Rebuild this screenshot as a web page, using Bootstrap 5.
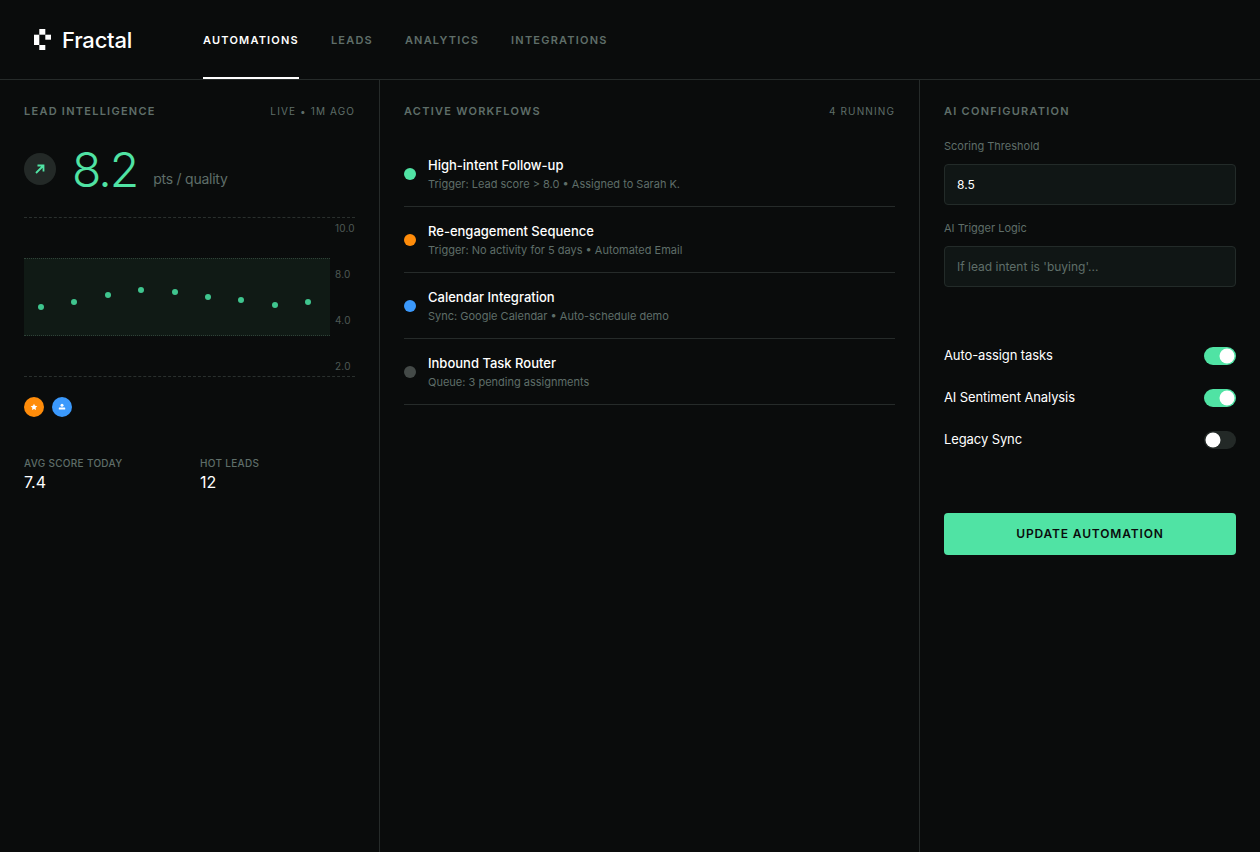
<!DOCTYPE html>
<html lang="en">
<head>
<meta charset="utf-8">
<title>Fractal</title>
<link href="https://cdn.jsdelivr.net/npm/bootstrap@5.3.0/dist/css/bootstrap.min.css" rel="stylesheet">
<style>
html,body{height:100%}
body{background:#0a0c0c;color:#fff;font-family:Inter,"Liberation Sans",sans-serif;overflow:hidden}
.top-bar{height:80px;border-bottom:1px solid #262b2a;padding-left:34px}
.brand-name{font-size:22px;font-weight:500;letter-spacing:-.01em;color:#fff;line-height:1;margin-left:11px;width:141px}
.nav-gap{gap:32px}
.top-link{font-size:11px;font-weight:600;letter-spacing:1.2px;color:#5f6e69;text-decoration:none;height:79px;padding-top:3px;display:flex;align-items:center;border-bottom:2px solid transparent}
.top-link.on{color:#fff;border-bottom-color:#fff}
.shell{height:772px}
.pane-a{width:380px;border-right:1px solid #262b2a;padding:24px}
.pane-b{width:540px;border-right:1px solid #262b2a;padding:24px}
.pane-c{width:340px;padding:24px}
.pane-head{font-size:11px;font-weight:600;letter-spacing:1.25px;color:#5f6e69;line-height:14px;margin-bottom:2px}
.pane-note{font-size:10px;letter-spacing:1.12px;color:#5f6e69;line-height:14px;margin-bottom:2px}
.score-row{margin-top:26px;height:47px;margin-bottom:24px}
.trend{width:32px;height:32px;border-radius:50%;background:#232927;margin-top:7px}
.score{font-size:48px;font-weight:300;color:#50e3a4;line-height:48px;margin-left:16px;letter-spacing:-2px}
.unit{font-size:14px;color:#5f6e69;margin-left:16px;margin-top:23px;line-height:20px;letter-spacing:-.25px}
.chart{height:160px;border-top:1px dashed #2a302e;border-bottom:1px dashed #2a302e;position:relative}
.band{position:absolute;left:0;top:40px;width:306px;height:78px;background:#101a15;border-top:1px dotted #2f4238;border-bottom:1px dotted #2f4238}
.band svg{display:block;width:306px;height:76px}
.ticks{position:absolute;right:0;top:3px;bottom:3px;width:20px;font-size:10px;line-height:14px;color:#4e5955;letter-spacing:.02em;display:flex;flex-direction:column;justify-content:space-between}
.badges{margin-top:20px;gap:8px}
.badge-dot{width:20px;height:20px;border-radius:50%}
.bg-orange{background:#ff8c0a}
.bg-blue{background:#3b99fc}
.stats{margin-top:39px}
.stat-cell{flex:0 0 176px}
.stat-label{font-size:10px;font-weight:500;letter-spacing:.3px;color:#5f6e69;line-height:14px}
.stat-value{font-size:16px;font-weight:400;color:#fff;line-height:24px}
.flow-list{margin-top:21px}
.flow{height:66px;border-bottom:1px solid #262b2a;gap:12px}
.flow-dot{width:12px;height:12px;border-radius:50%;flex:none}
.bg-mint{background:#50e3a4}
.bg-idle{background:#444a48}
.flow-title{font-size:13px;font-weight:500;color:#fff;line-height:20px}
.flow-sub{font-size:11px;color:#5f6e69;line-height:16px;margin-top:1px}
.group-one{margin-top:20px}
.group-two{margin-top:15px}
.field-label{font-size:11px;color:#5f6e69;line-height:16px;margin-bottom:10px;display:block}
.field{height:41px;background:#101615;border:1px solid #232b29;border-radius:4px;color:#fff;font-size:12px;padding:0 12px;font-family:inherit}
.field:focus{background:#101615;border-color:#232b29;color:#fff;box-shadow:none}
.field::placeholder{color:#5f6e69;opacity:1}
.switches{margin-top:48px}
.switch-row{height:42px;font-size:13px;color:#fff;letter-spacing:-.1px;padding:0;margin:0}
.form-switch .tog{width:32px;height:18px;margin:0;float:none;border:0;background-color:#232927;box-shadow:none;border-radius:9px;background-image:url("data:image/svg+xml,%3csvg xmlns='http://www.w3.org/2000/svg' viewBox='-9 -9 18 18'%3e%3ccircle r='7.5' fill='%23fff'/%3e%3c/svg%3e");background-position:left center}
.form-switch .tog:checked{background-color:#50e3a4;background-position:right center}
.cta{height:42px;background:#50e3a4;border:0;border-radius:4px;color:#0a0c0c;font-size:12px;font-weight:600;letter-spacing:.85px;margin-top:52px}
.cta:hover{background:#50e3a4;color:#0a0c0c}
</style>
</head>
<body>
<header class="top-bar d-flex align-items-center">
  <svg width="17" height="21" viewBox="0 0 17 21" fill="#fff" aria-hidden="true"><rect x="5.3" y="0" width="6" height="5.7"/><rect x="0" y="5.7" width="5.3" height="10.3"/><rect x="11.3" y="5.7" width="5.7" height="5"/><rect x="5.3" y="16" width="6" height="5"/></svg>
  <span class="brand-name">Fractal</span>
  <nav class="d-flex nav-gap">
    <a class="top-link on" href="#">AUTOMATIONS</a>
    <a class="top-link" href="#">LEADS</a>
    <a class="top-link" href="#">ANALYTICS</a>
    <a class="top-link" href="#">INTEGRATIONS</a>
  </nav>
</header>
<main class="shell d-flex">
  <section class="pane-a">
    <div class="d-flex justify-content-between align-items-center">
      <span class="pane-head">LEAD INTELLIGENCE</span>
      <span class="pane-note">LIVE • 1M AGO</span>
    </div>
    <div class="score-row d-flex align-items-start">
      <span class="trend d-flex align-items-center justify-content-center">
        <svg width="10" height="10" viewBox="0 0 10 10" fill="none" stroke="#50e3a4" stroke-width="1.8" aria-hidden="true"><path d="M1 9 8.500 1.500M2.500 1.500h6v6"/></svg>
      </span>
      <span class="score">8.2</span>
      <span class="unit">pts / quality</span>
    </div>
    <div class="chart">
      <div class="band">
        <svg viewBox="0 0 306 76" fill="#3fc58e" aria-hidden="true">
          <circle cx="17" cy="48" r="3"/><circle cx="50" cy="43" r="3"/><circle cx="84" cy="36" r="3"/><circle cx="117" cy="31" r="3"/><circle cx="151" cy="33" r="3"/><circle cx="184" cy="38" r="3"/><circle cx="217" cy="41" r="3"/><circle cx="251" cy="46" r="3"/><circle cx="284" cy="43" r="3"/>
        </svg>
      </div>
      <div class="ticks"><span>10.0</span><span>8.0</span><span>4.0</span><span>2.0</span></div>
    </div>
    <div class="badges d-flex">
      <span class="badge-dot bg-orange d-flex align-items-center justify-content-center">
        <svg width="8" height="8" viewBox="0 0 24 24" fill="#fff" aria-hidden="true"><path d="m12 2 3 6.600 7 .8-5.200 4.800 1.400 7L12 17.700 5.800 21.200l1.400-7L2 9.400l7-.8z"/></svg>
      </span>
      <span class="badge-dot bg-blue d-flex align-items-center justify-content-center">
        <svg width="10" height="10" viewBox="0 0 10 10" fill="#fff" aria-hidden="true"><circle cx="5" cy="3.300" r="1.500"/><rect x="1.800" y="5.600" width="6.400" height="2" rx=".4"/></svg>
      </span>
    </div>
    <div class="stats d-flex">
      <div class="stat-cell"><div class="stat-label">AVG SCORE TODAY</div><div class="stat-value">7.4</div></div>
      <div class="stat-cell"><div class="stat-label">HOT LEADS</div><div class="stat-value">12</div></div>
    </div>
  </section>
  <section class="pane-b">
    <div class="d-flex justify-content-between align-items-center">
      <span class="pane-head">ACTIVE WORKFLOWS</span>
      <span class="pane-note">4 RUNNING</span>
    </div>
    <div class="flow-list">
      <div class="flow d-flex align-items-center"><span class="flow-dot bg-mint"></span><div><div class="flow-title">High-intent Follow-up</div><div class="flow-sub">Trigger: Lead score &gt; 8.0 • Assigned to Sarah K.</div></div></div>
      <div class="flow d-flex align-items-center"><span class="flow-dot bg-orange"></span><div><div class="flow-title">Re-engagement Sequence</div><div class="flow-sub">Trigger: No activity for 5 days • Automated Email</div></div></div>
      <div class="flow d-flex align-items-center"><span class="flow-dot bg-blue"></span><div><div class="flow-title">Calendar Integration</div><div class="flow-sub">Sync: Google Calendar • Auto-schedule demo</div></div></div>
      <div class="flow d-flex align-items-center"><span class="flow-dot bg-idle"></span><div><div class="flow-title">Inbound Task Router</div><div class="flow-sub">Queue: 3 pending assignments</div></div></div>
    </div>
  </section>
  <section class="pane-c">
    <div class="pane-head">AI CONFIGURATION</div>
    <div class="group-one">
      <label class="field-label" for="th">Scoring Threshold</label>
      <input id="th" class="form-control field" type="text" value="8.5">
    </div>
    <div class="group-two">
      <label class="field-label" for="lg">AI Trigger Logic</label>
      <input id="lg" class="form-control field" type="text" placeholder="If lead intent is 'buying'...">
    </div>
    <div class="switches">
      <label class="form-check form-switch switch-row d-flex justify-content-between align-items-center">Auto-assign tasks<input class="form-check-input tog" type="checkbox" role="switch" checked></label>
      <label class="form-check form-switch switch-row d-flex justify-content-between align-items-center">AI Sentiment Analysis<input class="form-check-input tog" type="checkbox" role="switch" checked></label>
      <label class="form-check form-switch switch-row d-flex justify-content-between align-items-center">Legacy Sync<input class="form-check-input tog" type="checkbox" role="switch"></label>
    </div>
    <button class="btn cta w-100" type="button">UPDATE AUTOMATION</button>
  </section>
</main>
<script src="https://cdn.jsdelivr.net/npm/bootstrap@5.3.0/dist/js/bootstrap.bundle.min.js"></script>
</body>
</html>
